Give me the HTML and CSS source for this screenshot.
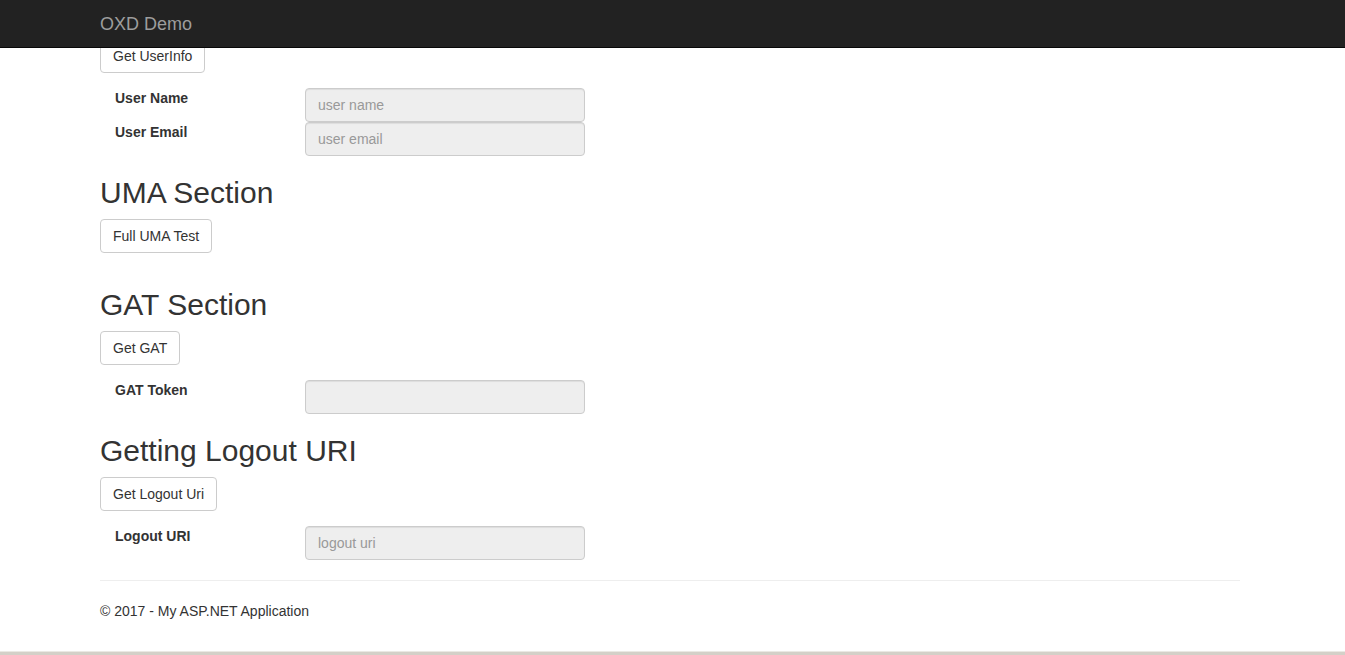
FILE: index.html
```html
<!DOCTYPE html>
<html>
<head>
<meta charset="utf-8">
<title>OXD Demo</title>
<link rel="stylesheet" href="styles.css">
</head>
<body>
<nav class="navbar">
  <div class="nav-inner"><span class="brand">OXD Demo</span></div>
</nav>
<main class="container">
  <button class="btn">Get UserInfo</button>
  <div class="fields">
    <label class="lbl">User Name</label>
    <input class="ctl" type="text" placeholder="user name" readonly>
    <label class="lbl">User Email</label>
    <input class="ctl" type="text" placeholder="user email" readonly>
  </div>

  <h2 class="sec">UMA Section</h2>
  <button class="btn">Full UMA Test</button>

  <h2 class="sec gap">GAT Section</h2>
  <button class="btn">Get GAT</button>
  <div class="fields">
    <label class="lbl">GAT Token</label>
    <input class="ctl" type="text" readonly>
  </div>

  <h2 class="sec">Getting Logout URI</h2>
  <button class="btn">Get Logout Uri</button>
  <div class="fields">
    <label class="lbl">Logout URI</label>
    <input class="ctl" type="text" placeholder="logout uri" readonly>
  </div>

  <hr class="rule">
  <footer class="foot"><p>© 2017 - My ASP.NET Application</p></footer>
</main>
<div class="frame-bottom"></div>
</body>
</html>
```

FILE: styles.css
```css
* { box-sizing: border-box; }
html, body { margin: 0; padding: 0; }
body {
  font-family: "Liberation Sans", Arial, Helvetica, sans-serif;
  font-size: 14px;
  line-height: 20px;
  color: #333;
  background: #fff;
  padding-top: 39px;
}
.navbar {
  position: fixed;
  top: 0; left: 0; right: 0;
  height: 48px;
  background: #222;
  border-bottom: 1px solid #080808;
  z-index: 10;
}
.nav-inner {
  margin-left: 100px;
  height: 47px;
  display: flex;
  align-items: center;
}
.brand {
  font-size: 18px;
  line-height: 20px;
  color: #9d9d9d;
}
.container {
  width: 1140px;
  margin-left: 100px;
}
.btn {
  display: block;
  font-family: inherit;
  font-size: 14px;
  line-height: 20px;
  height: 34px;
  padding: 6px 12px;
  color: #333;
  background: #fff;
  border: 1px solid #ccc;
  border-radius: 4px;
  margin: 0;
}
.fields {
  display: grid;
  grid-template-columns: 205px 280px;
  grid-auto-rows: 34px;
  margin-top: 15px;
}
.lbl {
  font-weight: bold;
  padding-left: 15px;
  line-height: 20px;
}
.ctl {
  height: 34px;
  width: 280px;
  padding: 6px 12px;
  font-family: inherit;
  font-size: 14px;
  line-height: 20px;
  color: #555;
  background: #eee;
  border: 1px solid #ccc;
  border-radius: 4px;
  box-shadow: inset 0 1px 1px rgba(0,0,0,.075);
  margin: 0;
  outline: none;
}
.ctl::placeholder { color: #999; opacity: 1; }
.sec {
  font-size: 30px;
  font-weight: 500;
  line-height: 33px;
  margin: 20px 0 10px;
  color: #333;
}
.sec.gap { margin-top: 35px; }
.rule {
  margin: 20px 0;
  border: 0;
  border-top: 1px solid #eee;
}
.foot p { margin: 0 0 10px; }
.frame-bottom {
  position: fixed;
  left: 0; right: 0; bottom: 0;
  height: 4px;
  background: #d4d0c8;
  border-top: 1px solid #ebe9e4;
}
```
